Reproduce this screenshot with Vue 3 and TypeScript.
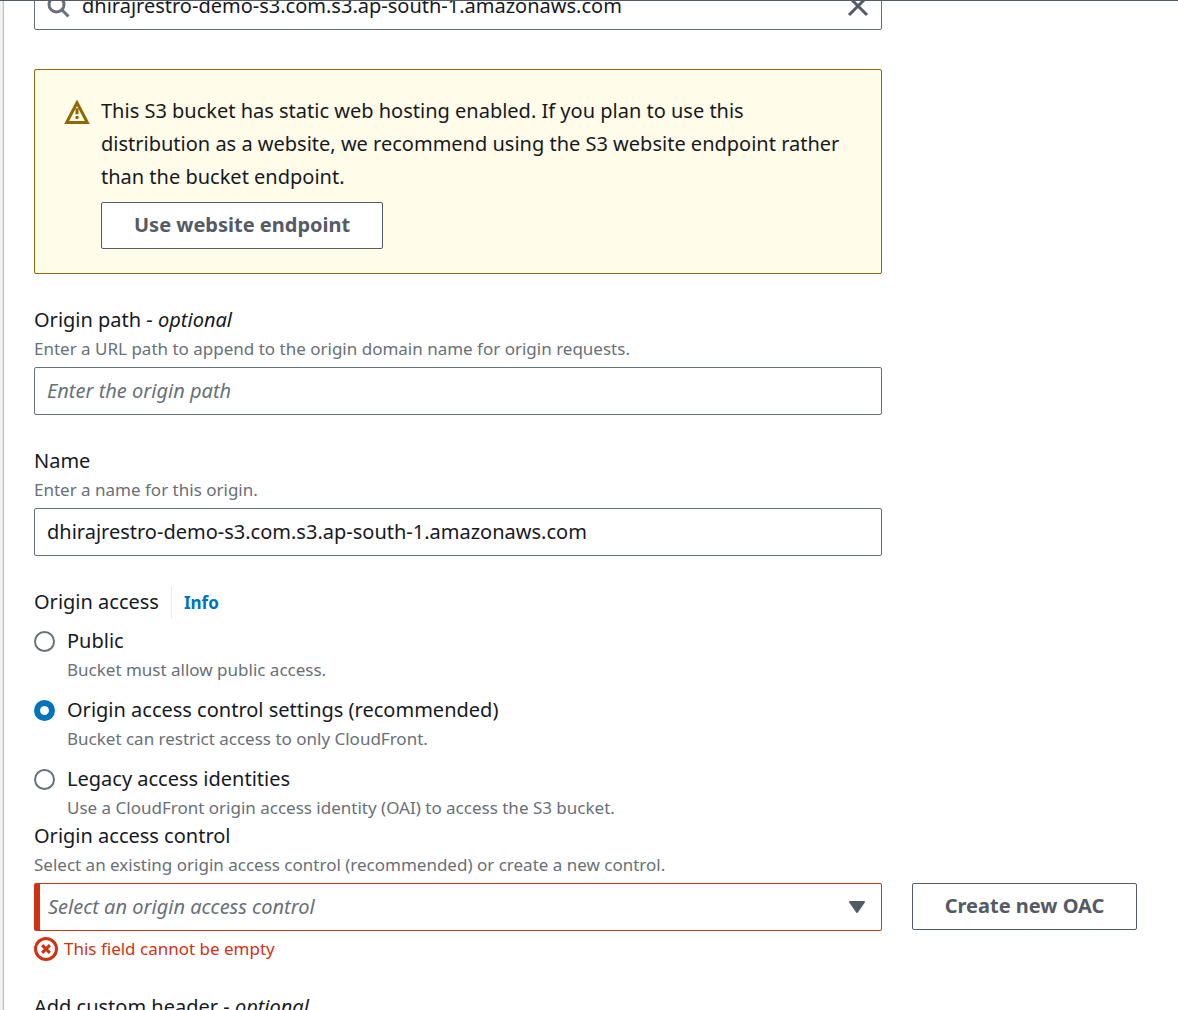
<script setup lang="ts">
import { ref } from 'vue'

interface AccessOption {
  value: string
  label: string
  description: string
}

const originDomain = ref('dhirajrestro-demo-s3.com.s3.ap-south-1.amazonaws.com')
const originPath = ref('')
const originName = ref('dhirajrestro-demo-s3.com.s3.ap-south-1.amazonaws.com')
const originAccess = ref('oac')
const accessControl = ref('')

const accessOptions: AccessOption[] = [
  { value: 'public', label: 'Public', description: 'Bucket must allow public access.' },
  {
    value: 'oac',
    label: 'Origin access control settings (recommended)',
    description: 'Bucket can restrict access to only CloudFront.',
  },
  {
    value: 'legacy',
    label: 'Legacy access identities',
    description: 'Use a CloudFront origin access identity (OAI) to access the S3 bucket.',
  },
]
</script>

<template>
  <main class="panel">
    <form class="form" @submit.prevent>
      <div class="control search">
        <svg class="icon search-icon" viewBox="0 0 16 16" aria-hidden="true">
          <circle cx="7" cy="7" r="5" />
          <path d="m15 15-4.5-4.5" />
        </svg>
        <input v-model="originDomain" class="input" type="text" aria-label="Origin domain" />
        <button class="clear" type="button" aria-label="Clear" @click="originDomain = ''">
          <svg class="icon" viewBox="0 0 16 16" aria-hidden="true">
            <path d="m2 2 12 12M14 2 2 14" />
          </svg>
        </button>
      </div>

      <section class="alert">
        <svg class="icon alert-icon" viewBox="0 0 16 16" aria-hidden="true">
          <path d="M8 1.8 1.1 15h13.8L8 1.8Z" />
          <path d="M8 5.5v4M8 10.7v2" />
        </svg>
        <div class="alert-body">
          <p class="alert-text">
            This S3 bucket has static web hosting enabled. If you plan to use this distribution as a
            website, we recommend using the S3 website endpoint rather than the bucket endpoint.
          </p>
          <button class="button" type="button">Use website endpoint</button>
        </div>
      </section>

      <div class="field">
        <label class="label" for="origin-path">Origin path - <em>optional</em></label>
        <p class="hint">Enter a URL path to append to the origin domain name for origin requests.</p>
        <div class="control">
          <input
            id="origin-path"
            v-model="originPath"
            class="input"
            type="text"
            placeholder="Enter the origin path"
          />
        </div>
      </div>

      <div class="field">
        <label class="label" for="origin-name">Name</label>
        <p class="hint">Enter a name for this origin.</p>
        <div class="control">
          <input id="origin-name" v-model="originName" class="input" type="text" />
        </div>
      </div>

      <div class="field" role="radiogroup" aria-labelledby="access-title">
        <div class="label-row">
          <span id="access-title" class="label">Origin access</span>
          <a class="info" href="#info">Info</a>
        </div>
        <div class="options">
          <label v-for="option in accessOptions" :key="option.value" class="option">
            <input
              v-model="originAccess"
              class="radio"
              type="radio"
              name="origin-access"
              :value="option.value"
            />
            <span class="option-text">
              <span class="label">{{ option.label }}</span>
              <span class="hint">{{ option.description }}</span>
            </span>
          </label>
        </div>
      </div>

      <div class="field flush">
        <label class="label" for="access-control">Origin access control</label>
        <p class="hint">
          Select an existing origin access control (recommended) or create a new control.
        </p>
        <div class="control invalid">
          <select id="access-control" v-model="accessControl" class="input select">
            <option value="" disabled>Select an origin access control</option>
          </select>
          <svg class="icon caret" viewBox="0 0 24 24" aria-hidden="true">
            <path d="M5 7h14l-7 10Z" />
          </svg>
        </div>
        <p class="error">
          <svg class="icon" viewBox="0 0 16 16" aria-hidden="true">
            <circle cx="8" cy="8" r="7" />
            <path d="m5.4 5.4 5.2 5.2M10.6 5.4l-5.2 5.2" />
          </svg>
          This field cannot be empty
        </p>
      </div>
      <button class="button create" type="button">Create new OAC</button>

      <div class="field">
        <span class="label">Add custom header - <em>optional</em></span>
      </div>
    </form>
  </main>
</template>

<style>
body {
  margin: 0;
  background: #ffffff;
}
</style>

<style scoped>
.panel {
  box-sizing: border-box;
  height: 100vh;
  overflow: hidden;
  border-top: 1px solid #545b64;
  background: linear-gradient(to right, #f2f3f3 2px, #e2e6e6 2px 3px, #bcc4c4 3px 4px, #ffffff 4px);
  color: #16191f;
  font-family: 'Noto Sans', 'Open Sans', sans-serif;
  font-size: 20px;
  line-height: 33px;
}

.form {
  display: grid;
  grid-template-columns: minmax(0, 1fr) 225px;
  column-gap: 30px;
  margin-top: -19px;
  padding: 0 41px 0 34px;
}

.form > * {
  grid-column: 1;
}

p {
  margin: 0;
}

.icon {
  flex: none;
  width: 24px;
  height: 24px;
  fill: none;
  stroke: currentColor;
  stroke-width: 2;
}

.control {
  box-sizing: border-box;
  display: flex;
  align-items: center;
  height: 48px;
  padding: 0 12px;
  border: 1px solid #687078;
  border-radius: 2px;
  background: #ffffff;
}

.input {
  box-sizing: border-box;
  flex: 1;
  min-width: 0;
  height: 100%;
  margin: 0;
  padding: 0 0 2px;
  border: 0;
  outline: 0;
  background: transparent;
  color: inherit;
  font: inherit;
}

.input::placeholder {
  color: #687078;
  font-style: italic;
  opacity: 1;
}

.search {
  gap: 12px;
  padding: 0 11px;
}

.search-icon {
  color: #687078;
}

.clear {
  display: flex;
  padding: 0;
  border: 0;
  background: transparent;
  color: #545b64;
}

.alert {
  display: flex;
  gap: 12px;
  margin-top: 39px;
  padding: 24px 30px;
  border: 1px solid #906806;
  border-radius: 2px;
  background: #fffce9;
}

.alert-icon {
  margin-top: 6px;
  color: #906806;
  overflow: visible;
}

.button {
  box-sizing: border-box;
  height: 47px;
  padding: 0 32px 2px;
  border: 1px solid #545b64;
  border-radius: 2px;
  background: #ffffff;
  color: #545b64;
  font: inherit;
  font-weight: 700;
  white-space: nowrap;
}

.alert .button {
  margin-top: 9px;
}

.field {
  margin-top: 30px;
}

.flush {
  margin-top: 0;
}

.label {
  display: block;
  padding-bottom: 2px;
  line-height: 31px;
}

.hint {
  display: block;
  color: #687078;
  font-size: 17px;
  line-height: 24px;
}

.hint + .control {
  margin-top: 6px;
}

.label-row {
  display: flex;
}

.info {
  margin-left: 12px;
  padding-left: 12px;
  border-left: 1px solid #eaeded;
  color: #0073bb;
  font-size: 17px;
  font-weight: 700;
  text-decoration: none;
}

.options {
  display: flex;
  flex-direction: column;
  gap: 12px;
  margin-top: 6px;
}

.option {
  display: flex;
  gap: 12px;
}

.radio {
  appearance: none;
  box-sizing: border-box;
  flex: none;
  width: 21px;
  height: 21px;
  margin: 6px 0 0;
  border: 2px solid #687078;
  border-radius: 50%;
  background: #ffffff;
}

.radio:checked {
  border: 6px solid #0073bb;
}

.invalid {
  position: relative;
  padding-left: 8px;
  border-color: #d13212;
  border-left-width: 6px;
}

.select {
  appearance: none;
  color: #687078;
  font-style: italic;
}

.caret {
  position: absolute;
  right: 12px;
  color: #545b64;
  fill: currentColor;
  stroke-linejoin: round;
  pointer-events: none;
}

.error {
  display: flex;
  gap: 6px;
  margin-top: 6px;
  color: #d13212;
  font-size: 17px;
  line-height: 24px;
}

.form > .create {
  grid-column: 2;
  align-self: start;
  margin-top: 63px;
  padding: 0 0 2px;
}
</style>
